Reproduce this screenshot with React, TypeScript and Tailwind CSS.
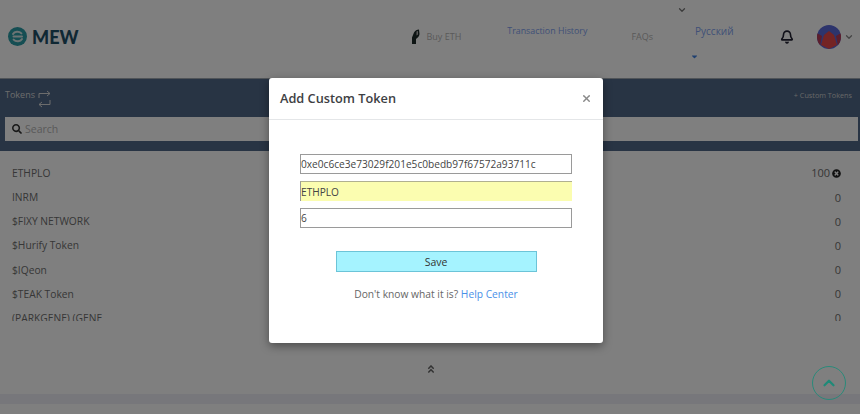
import { Bell, ChevronDown, ChevronUp, X } from "lucide-react";
import { FaAngleDoubleUp, FaCaretDown, FaSearch, FaTimesCircle } from "react-icons/fa";

const tokens = [
  ["ETHPLO", "100"],
  ["INRM", "0"],
  ["$FIXY NETWORK", "0"],
  ["$Hurify Token", "0"],
  ["$IQeon", "0"],
  ["$TEAK Token", "0"],
  ["(PARKGENE) (GENE", "0"],
];

function Logo() {
  return (
    <div className="flex shrink-0 items-center gap-[5px]">
      <svg width="19" height="19" viewBox="0 0 19 19" fill="none">
        <circle cx="9.5" cy="9.5" r="9.5" fill="#2a9ca6" />
        <path
          d="M5 7C6.500 4.400 11 4 13.400 6.400M14 12C12.500 14.600 8 15 5.600 12.600M5.500 9.500H14"
          stroke="#d8e8e8"
          strokeWidth="2"
          strokeLinecap="round"
        />
      </svg>
      <span className="font-['Lato',sans-serif] text-[18px] font-black leading-none text-[#1f5068]">MEW</span>
    </div>
  );
}

function Header() {
  return (
    <header className="flex h-[78px] items-center whitespace-nowrap pb-[5px] pl-2 text-[9px]">
      <Logo />
      <div className="ml-[332px] flex shrink-0 items-center gap-[7px]">
        <svg width="9" height="16" viewBox="0 0 9 16" fill="none">
          <path d="M1 15V8.500L3 3.500C4 1.500 6 .5 8 .5L8.500 5C8.500 7 6.500 9 5 10V15Z" fill="#1c2a28" />
          <path d="M5.500 2.500L7 2V5.500L5.500 6.500Z" fill="#b0b0b0" />
        </svg>
        <span className="text-[#b4b4b4]">Buy ETH</span>
      </div>
      <span className="mb-[10px] ml-[46px] shrink-0 text-[8.85px] text-[#7f9fef]">Transaction History</span>
      <span className="ml-[44px] shrink-0 text-[#b4b4b4]">FAQs</span>
      <div className="ml-[42px] flex shrink-0 flex-col items-start self-start pt-[5px]">
        <ChevronDown className="ml-[-18px] h-[10px] w-[10px] text-[#777]" strokeWidth={3} />
        <span className="mt-[9px] text-[10px] leading-[14px] text-[#7f9fef]">Русский</span>
        <FaCaretDown className="-ml-[5px] mt-[14px] h-[9px] w-[9px] text-[#3f80e0]" />
      </div>
      <Bell className="ml-[46px] h-[14px] w-[14px] shrink-0 text-[#223]" strokeWidth={2.8} />
      <div className="ml-[23px] h-[24px] w-[24px] shrink-0 overflow-hidden rounded-full bg-[#5a68d8]">
        <svg width="24" height="24" viewBox="0 0 24 24">
          <path d="M12 6l5 4 3 10-8 4-8-4 3-10Z" fill="#e84848" />
          <path d="M0 8l5 3-2 10-3-3ZM24 8l-5 3 2 10 3-3Z" fill="#b83c58" />
        </svg>
      </div>
      <ChevronDown className="ml-[3px] h-[10px] w-[10px] shrink-0 text-[#888]" strokeWidth={3} />
    </header>
  );
}

function TokenBand() {
  return (
    <section className="h-[73px] border-t border-[#a0a8b0] bg-[#506888] px-[5px]">
      <div className="flex h-[38px] items-start justify-between pr-[3px] pt-[9px] text-[#d8d8d8]">
        <div className="flex items-start gap-[3px] text-[9px]">
          <span>Tokens</span>
          <svg className="mt-[1px]" width="13" height="20" viewBox="0 0 13 20" fill="none" stroke="currentColor">
            <path d="M1 9V4.500H12M9 2l3 2.500L9 7M12 11v4.500H1M4 13l-3 2.500L4 18" strokeWidth="1" />
          </svg>
        </div>
        <span className="mt-[2px] text-[7.25px] text-[#cfcfcf]">+ Custom Tokens</span>
      </div>
      <div className="mr-[-3px] flex h-[24px] items-center gap-[3px] bg-white pl-[7px]">
        <FaSearch className="h-[10px] w-[10px] text-[#333]" />
        <span className="pt-[1px] text-[10.5px] text-[#b4b4b4]">Search</span>
      </div>
    </section>
  );
}

function TokenList() {
  return (
    <div className="h-[170px] overflow-hidden pl-3 pr-[19px] pt-[10px] text-[10.25px] text-[#6e6e6e]">
      {tokens.map(([name, value], i) => (
        <div key={name} className="flex h-[24.2px] items-center justify-between pt-[1px]">
          <span>{name}</span>
          <span className="flex items-center gap-[2px] text-[11px]">
            {value}
            {i === 0 && <FaTimesCircle className="h-[9px] w-[9px] text-[#222]" />}
          </span>
        </div>
      ))}
    </div>
  );
}

function Modal() {
  const inputClass =
    "h-[20px] w-[272px] border border-[#9a9a9a] px-0 text-[10.15px] leading-none text-[#444] outline-none";
  return (
    <div className="absolute left-[269px] top-[78px] h-[265px] w-[334px] rounded-[3px] bg-white shadow-[0_3px_10px_rgba(0,0,0,0.4)]">
      <div className="flex h-[42px] items-center justify-between border-b border-[#e4e6e8] px-[11px] pt-[1px]">
        <h2 className="text-[12.75px] font-semibold text-[#3d4043]">Add Custom Token</h2>
        <X className="mb-[2px] h-[11px] w-[11px] text-[#888]" strokeWidth={3} />
      </div>
      <div className="flex flex-col items-center">
        <div className="mt-[34px] flex flex-col gap-[7px]">
          <input className={inputClass} readOnly value="0xe0c6ce3e73029f201e5c0bedb97f67572a93711c" />
          <input
            className={`${inputClass} border-b-0 border-r-0 border-l-[#9a9a9a] border-t-[#b0b090] bg-[#fbfdb0]`}
            readOnly
            value="ETHPLO"
          />
          <input className={inputClass} readOnly value="6" />
        </div>
        <button className="mt-[23px] h-[21px] w-[201px] border border-[#6cc4d8] bg-[#a5f3ff] pt-[2px] text-[10.5px] text-[#333]">
          Save
        </button>
        <p className="mt-[15px] text-[10.25px] text-[#666]">
          Don't know what it is? <a className="text-[#4a90e8]">Help Center</a>
        </p>
      </div>
    </div>
  );
}

export default function App() {
  return (
    <div className="relative h-[414px] w-[860px] overflow-hidden bg-white font-['Open_Sans',sans-serif]">
      <Header />
      <TokenBand />
      <TokenList />
      <div className="flex h-[73px] justify-center pl-[2px] pt-[43px] text-[#666]">
        <FaAngleDoubleUp className="h-[10px] w-[10px]" />
      </div>
      <div className="h-[10px] bg-[#eeeef6]" />
      <div className="absolute inset-0 bg-black/50" />
      <Modal />
      <button className="absolute bottom-[14px] right-[14px] flex h-[34px] w-[34px] items-center justify-center rounded-full border border-[#2a8a7a] text-[#1f8a78]">
        <ChevronUp className="h-[18px] w-[18px]" strokeWidth={3} />
      </button>
    </div>
  );
}
